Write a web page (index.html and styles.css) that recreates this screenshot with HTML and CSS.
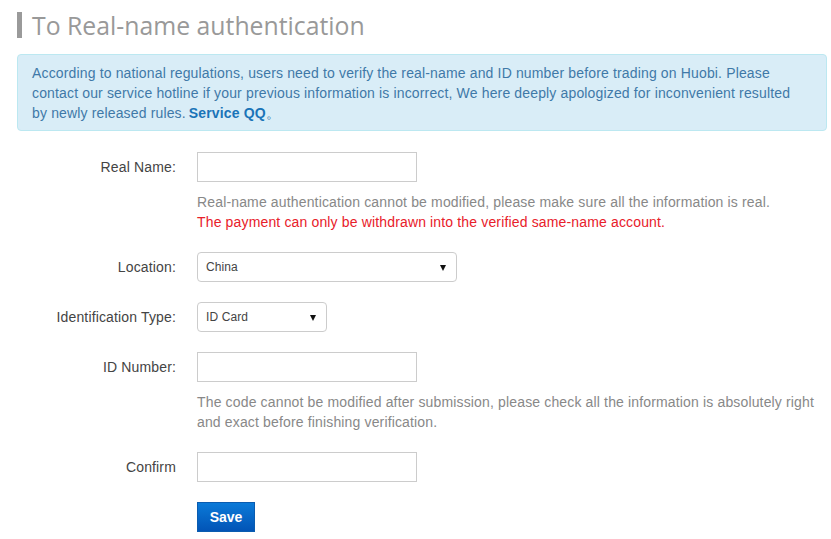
FILE: index.html
```html
<!DOCTYPE html>
<html>
<head>
<meta charset="utf-8">
<link rel="stylesheet" href="styles.css">
</head>
<body>
<div class="page">
  <h1 class="title">To Real-name authentication</h1>
  <div class="alert">According to national regulations, users need to verify the real-name and ID number before trading on Huobi. Please contact our service hotline if your previous information is incorrect, We here deeply apologized for inconvenient resulted by newly released rules.<a class="qq" href="#">Service QQ</a><span class="dot">。</span></div>

  <form class="form">
    <div class="row">
      <label class="lbl">Real Name:</label>
      <div class="field">
        <input class="inp" type="text">
        <p class="help">Real-name authentication cannot be modified, please make sure all the information is real.<br><span class="warn">The payment can only be withdrawn into the verified same-name account.</span></p>
      </div>
    </div>
    <div class="row">
      <label class="lbl">Location:</label>
      <div class="field">
        <div class="sel sel-wide"><span>China</span><i class="arrow"></i></div>
      </div>
    </div>
    <div class="row">
      <label class="lbl">Identification Type:</label>
      <div class="field">
        <div class="sel sel-narrow"><span>ID Card</span><i class="arrow"></i></div>
      </div>
    </div>
    <div class="row">
      <label class="lbl">ID Number:</label>
      <div class="field">
        <input class="inp" type="text">
        <p class="help">The code cannot be modified after submission, please check all the information is absolutely right and exact before finishing verification.</p>
      </div>
    </div>
    <div class="row">
      <label class="lbl">Confirm</label>
      <div class="field">
        <input class="inp" type="text">
      </div>
    </div>
    <div class="row">
      <span class="lbl"></span>
      <div class="field">
        <button class="btn" type="button">Save</button>
      </div>
    </div>
  </form>
</div>
</body>
</html>
```

FILE: styles.css
```css
* { box-sizing: border-box; }
html, body { margin: 0; padding: 0; background: #fff; }
body { font-family: "Liberation Sans", Arial, sans-serif; font-size: 14px; color: #333; letter-spacing: 0.15px; }

.page { padding: 12px 4px 0 17px; width: 831px; }

.title {
  margin: 0;
  height: 26px;
  border-left: 5px solid #9a9a9a;
  padding-left: 10px;
  font-family: "Open Sans", "Liberation Sans", sans-serif;
  font-weight: normal;
  font-size: 24.8px;
  line-height: 26px;
  letter-spacing: 0;
  color: #999;
}

.alert {
  margin-top: 16px;
  background: #d9edf7;
  border: 1px solid #bce8f1;
  border-radius: 4px;
  padding: 8px 22px 7px 14px;
  line-height: 20px;
  color: #3f79a8;
}
.qq { color: #1a74b8; font-weight: bold; text-decoration: none; margin-left: 3px; }
.dot { display: inline-block; }

.form { margin: 21px 0 0 0; }
.row {
  display: grid;
  grid-template-columns: 159px 1fr;
  column-gap: 21px;
  margin-bottom: 20px;
}
.lbl { text-align: right; line-height: 30px; color: #444; }
.field { min-width: 0; }

.inp {
  display: block;
  width: 220px;
  height: 30px;
  border: 1px solid #ccc;
  margin: 0;
  padding: 4px 8px;
  font: inherit;
  background: #fff;
}

.help {
  margin: 10px 0 0 0;
  line-height: 20px;
  color: #888;
}
.warn { color: #e8202a; }

.sel {
  display: flex;
  align-items: center;
  height: 30px;
  border: 1px solid #ccc;
  border-radius: 4px;
  padding: 0 10px 0 8px;
  font-size: 12px;
  letter-spacing: 0.1px;
  color: #444;
  background: #fff;
}
.sel span { flex: 1; }
.sel-wide { width: 260px; }
.sel-narrow { width: 130px; }
.arrow {
  width: 0; height: 0;
  border-left: 3.5px solid transparent;
  border-right: 3.5px solid transparent;
  border-top: 6px solid #111;
  margin-top: 1px;
}

.btn {
  display: block;
  width: 58px;
  height: 30px;
  border: 1px solid #0a5cb0;
  background: linear-gradient(#0b7ad8, #0254b6);
  color: #fff;
  font-family: "Liberation Sans", Arial, sans-serif;
  font-size: 14px;
  font-weight: bold;
  padding: 0;
  margin-top: 0;
}
```
